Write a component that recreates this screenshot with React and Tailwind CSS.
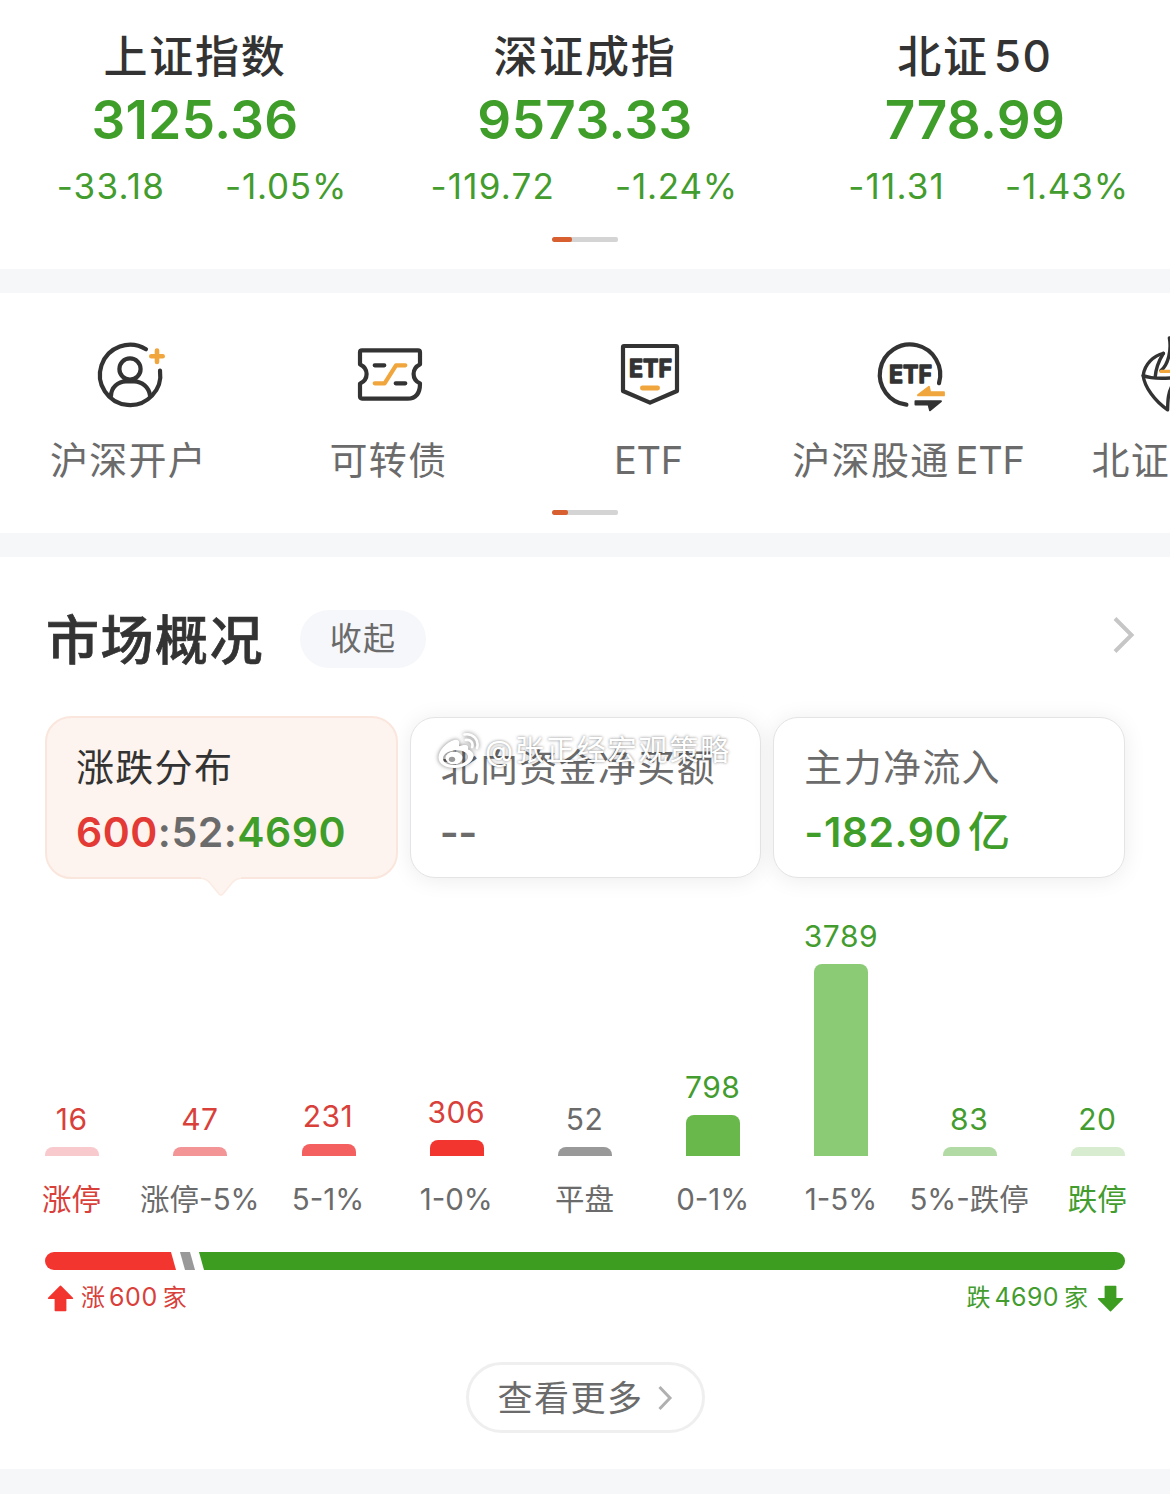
import React from 'react';

const INDICES = [
  { name: '上证指数', value: '3125.36', change: '-33.18', percent: '-1.05%' },
  { name: '深证成指', value: '9573.33', change: '-119.72', percent: '-1.24%' },
  { name: '北证', suffix: '50', value: '778.99', change: '-11.31', percent: '-1.43%' },
];

const BUCKETS = [
  { label: '涨停', count: 16, height: 9, bar: 'bg-[#f8c9cd]', text: 'text-[#d9403a]', labelText: 'text-[#d9403a]' },
  { label: '涨停-5%', count: 47, height: 9, bar: 'bg-[#f39496]', text: 'text-[#d9403a]', labelText: 'text-[#6b6b6b]' },
  { label: '5-1%', count: 231, height: 12, bar: 'bg-[#f45f5f]', text: 'text-[#d9403a]', labelText: 'text-[#6b6b6b]' },
  { label: '1-0%', count: 306, height: 16, bar: 'bg-[#f2352e]', text: 'text-[#d9403a]', labelText: 'text-[#6b6b6b]' },
  { label: '平盘', count: 52, height: 9, bar: 'bg-[#999999]', text: 'text-[#6b6b6b]', labelText: 'text-[#6b6b6b]' },
  { label: '0-1%', count: 798, height: 41, bar: 'bg-[#68b84b]', text: 'text-[#439c2e]', labelText: 'text-[#6b6b6b]' },
  { label: '1-5%', count: 3789, height: 192, bar: 'bg-[#8bcb76]', text: 'text-[#439c2e]', labelText: 'text-[#6b6b6b]' },
  { label: '5%-跌停', count: 83, height: 9, bar: 'bg-[#b1daa4]', text: 'text-[#439c2e]', labelText: 'text-[#6b6b6b]' },
  { label: '跌停', count: 20, height: 9, bar: 'bg-[#d8eccf]', text: 'text-[#439c2e]', labelText: 'text-[#439c2e]' },
];

const DARK = '#333333';
const ORANGE = '#f0a63c';

const AccountIcon = () => (
  <svg width="80" height="80" viewBox="0 0 80 80" fill="none" stroke={DARK} strokeWidth="4.2" strokeLinecap="round">
    <path d="M56 14.2A30.2 30.2 0 1 0 70 35.6" />
    <circle cx="40" cy="34" r="10.6" />
    <path d="M21 61C21 52.5 28 46.4 36 46.4H44C52 46.4 59 52.5 60 60.5" />
    <path d="M67 15.6V27M61.3 21.3H72.7" stroke={ORANGE} strokeWidth="4.6" />
  </svg>
);

const BondIcon = () => (
  <svg width="80" height="80" viewBox="0 0 80 80" fill="none" stroke={DARK} strokeWidth="4.2" strokeLinecap="round" strokeLinejoin="round">
    <path d="M12 15.4H68Q70 15.4 70 17.4V29.3C66 31.2 63.6 34.8 63.6 39S66 46.6 70 48.4C70 58 66 63.6 57.5 63.6H12Q10 63.6 10 61.6V48.6C14 46.8 16.6 43.2 16.6 39S14 31.2 10 29.3V17.4Q10 15.4 12 15.4Z" />
    <path d="M24.7 30.3H34.3M45.7 48.3H55.3" />
    <path d="M24.7 48.3H34.6L46 30.3H55.3" stroke={ORANGE} />
  </svg>
);

const IconText = ({ y }) => (
  <text
    x="19"
    y={y}
    textLength="43"
    lengthAdjust="spacingAndGlyphs"
    fontFamily="Inter, sans-serif"
    fontSize="24.5"
    fontWeight="700"
    fill={DARK}
    stroke={DARK}
    strokeWidth="1.4"
    strokeLinejoin="round"
  >
    ETF
  </text>
);

const EtfIcon = () => (
  <svg width="80" height="80" viewBox="0 0 80 80" fill="none" stroke={DARK} strokeWidth="4.2" strokeLinecap="round" strokeLinejoin="round">
    <path d="M14 11H66Q67 11 67 12V56L40 67.6L13 56V12Q13 11 14 11Z" />
    <IconText y="42.4" />
    <path d="M32.4 53H47.6" stroke={ORANGE} strokeWidth="4.8" />
  </svg>
);

const ConnectIcon = () => (
  <svg width="80" height="80" viewBox="0 0 80 80" fill="none" stroke={DARK} strokeWidth="4.2" strokeLinecap="round" strokeLinejoin="round">
    <path d="M69 48.2A30.2 30.2 0 1 0 36.4 69.7" />
    <IconText y="48.2" />
    <path d="M48 60L59 51.8L60.2 57.2H74L74 60.4H48Z" fill={ORANGE} stroke={ORANGE} strokeWidth="1.8" />
    <path d="M45.4 66.2H71L60 75.4L58.4 69.6H45.4Z" fill={DARK} strokeWidth="1.8" />
  </svg>
);

const BeijingIcon = () => (
  <svg width="40" height="80" viewBox="0 0 40 80" fill="none" stroke={DARK} strokeWidth="3.4" strokeLinecap="round" strokeLinejoin="round">
    <path d="M33.4 18.4C24 20.5 14.5 29 13.2 40.6C14.5 52 25 66.500 37.6 74.8C37.8 65 38 57 43 49" />
    <path d="M33.4 18.4C29 25.5 26 32 25.2 41.8" />
    <path d="M13.2 40.6C21 43.6 30 43.8 42 42.8" />
    <path d="M39.4 3C41.5 15 38.5 29 31 35.6" />
    <path d="M31 36.4H42" stroke={ORANGE} />
  </svg>
);

const WeiboIcon = () => (
  <svg width="44" height="38" viewBox="0 0 44 38" className="drop-shadow-[0_0_2px_rgba(0,0,0,0.5)]">
    <path
      fill="#fff"
      fillRule="evenodd"
      d="M17 8C10 10 1.5 18 1.5 25.5C1.5 32 9 36 17.5 36C28 36 36.5 30 36.5 23.8C36.5 20.2 33.5 18.2 31 17.4C32 13.5 30 11.5 22 14.2C23 10 22 7 17 8ZM17 18.5C25 17.6 31 20.6 31 25C31 29.3 25 32.7 18 33C11 33.2 6 30.5 6 26.5C6 22.5 10.5 19.2 17 18.5Z"
    />
    <ellipse cx="17" cy="26" rx="8.5" ry="6.4" fill="#fff" />
    <ellipse cx="15" cy="27.3" rx="3.2" ry="2.6" fill="#999" />
    <path d="M27.5 2.5C36 1 42.5 8 40 16M28.8 8C33.5 7.2 36.5 11 35.2 15" fill="none" stroke="#fff" strokeWidth="2.6" strokeLinecap="round" />
  </svg>
);

const UpArrow = ({ className }) => (
  <svg width="27" height="27" viewBox="0 0 27 27" className={className} fill="currentColor" stroke="currentColor" strokeWidth="1.6" strokeLinejoin="round">
    <path d="M13.5 1.4L25.4 13.2H18.6V25.4H8.4V13.2H1.6Z" />
  </svg>
);

const Pager = ({ active }) => (
  <div className="mx-auto h-[5px] w-[66px] overflow-hidden rounded-[2px] bg-[#d4d4d4]">
    <div className={`h-full rounded-[2px] bg-[#d85f2f] ${active}`} />
  </div>
);

const Shortcut = ({ icon, children }) => (
  <div className="flex w-[260px] shrink-0 flex-col items-center">
    {icon}
    <div className="mt-5 -ml-[3px] flex text-[38px] leading-[50px] tracking-[1.3px] text-[#6b6b6b]">{children}</div>
  </div>
);

const Card = ({ title, children }) => (
  <div className="mt-px h-[161px] flex-1 rounded-[25px] border border-[#e4e4e6] bg-white pt-[24px] pl-[30px] shadow-[0_2px_22px_rgba(0,0,0,0.08)]">
    <div className="text-[38px] leading-[50px] tracking-[1.3px] text-[#6b6b6b]">{title}</div>
    <div className="mt-[15px] flex text-[41px] leading-[50px] font-semibold tracking-[0.5px]">{children}</div>
  </div>
);

const App = () => {
  return (
    <div className="h-[1494px] w-[1170px] overflow-hidden bg-[#f6f7f9] font-['Inter','Noto_Sans_CJK_SC',sans-serif]">
      <section className="h-[269px] bg-white pt-[29px]">
        <div className="grid grid-cols-3">
          {INDICES.map(item => (
            <div key={item.name} className="flex flex-col items-center">
              <div className="flex gap-[5px] text-[44px] leading-[56px] font-medium tracking-[1.7px] text-[#333]">
                {item.name}
                {item.suffix && <span className="-mt-px">{item.suffix}</span>}
              </div>
              <div className="mt-[5px] text-[53px] leading-[60px] font-semibold tracking-[0.4px] text-[#3f9e29]">{item.value}</div>
              <div className="mt-[12px] flex w-full gap-[60px] text-[35px] leading-[48px] text-[#439c2e]">
                <div className="flex-1 text-right tracking-[1.2px]">{item.change}</div>
                <div className="flex-1 tracking-[0.8px]">{item.percent}</div>
              </div>
            </div>
          ))}
        </div>
        <div className="mt-[27px]">
          <Pager active="w-[20px]" />
        </div>
      </section>

      <section className="mt-6 h-[240px] bg-white pt-[42px]">
        <div className="flex overflow-hidden">
          <Shortcut icon={<AccountIcon />}>沪深开户</Shortcut>
          <Shortcut icon={<BondIcon />}>可转债</Shortcut>
          <Shortcut icon={<EtfIcon />}>
            <span className="tracking-[-0.3px]">ETF</span>
          </Shortcut>
          <Shortcut icon={<ConnectIcon />}>
            沪深股通<span className="ml-[6px] tracking-[-0.2px]">ETF</span>
          </Shortcut>
          <div className="flex w-[130px] flex-col items-end">
            <BeijingIcon />
            <div className="mt-5 text-[38px] leading-[50px] tracking-[1.3px] text-[#6b6b6b]">北证</div>
          </div>
        </div>
        <div className="mt-[25px]">
          <Pager active="w-[16px]" />
        </div>
      </section>

      <section className="mt-6 h-[912px] bg-white px-[45px] pt-[52px]">
        <div className="flex h-[59px] items-center">
          <h2 className="mt-[5px] ml-px text-[53px] leading-[59px] font-medium tracking-[1.5px] text-[#333] [-webkit-text-stroke:0.7px_#333]">
            市场概况
          </h2>
          <button className="ml-[36px] h-[58px] w-[126px] rounded-full bg-[#f6f7fa] text-[32px] leading-[56px] tracking-[1.2px] text-[#6b6b6b]">
            收起
          </button>
          <svg width="24" height="40" viewBox="0 0 24 40" className="-mr-[11px] mb-2 ml-auto" fill="none" stroke="#c6c6c6" strokeWidth="4">
            <path d="M3 3.5L19.5 20L3 36.5" />
          </svg>
        </div>

        <div className="relative mt-[48px] flex gap-3">
          <div className="relative h-[163px] flex-1 rounded-[26px] border-2 border-[#fae6dc] bg-[#fdf4ef] pt-[24px] pl-[29px]">
            <div className="text-[38px] leading-[50px] tracking-[1.3px] text-[#333]">涨跌分布</div>
            <div className="mt-[15px] flex text-[41px] leading-[50px] font-semibold tracking-[0.5px]">
              <span className="text-[#e33a35]">600</span>
              <span className="text-[#6b6b6b]">:52:</span>
              <span className="text-[#3f9e29]">4690</span>
            </div>
            <svg width="40" height="20" viewBox="0 0 40 20" className="absolute -bottom-[20px] left-[154px]">
              <path d="M0 0H40V1C36 1.5 34 3 31 6L22 17Q20 19 18 17L9 6C6 3 4 1.5 0 1Z" fill="#fdf4ef" />
              <path d="M1 1.5C5 1.5 7 4 9 6L18 17Q20 19 22 17L31 6C33 4 35 1.5 39 1.5" fill="none" stroke="#fbebe3" strokeWidth="1.5" />
            </svg>
          </div>
          <Card title="北向资金净买额">
            <span className="-ml-px tracking-[-0.6px] text-[#6b6b6b]">--</span>
          </Card>
          <Card title="主力净流入">
            <span className="text-[#3f9e29]">-182.90</span>
            <span className="ml-[6px] text-[42px] font-medium text-[#3f9e29]">亿</span>
          </Card>
          <div className="absolute top-[14px] left-[392px] flex items-center">
            <WeiboIcon />
            <span className="mt-px ml-[4px] text-[29px] leading-[40px] tracking-[1.9px] text-white [text-shadow:0_0_3px_rgba(0,0,0,0.5)]">
              @张正经宏观策略
            </span>
          </div>
        </div>

        <div className="-mx-[37px] mt-[21px] flex h-[256px] items-end">
          {BUCKETS.map(b => (
            <div key={b.label} className="flex flex-1 flex-col items-center">
              <div className={`-ml-px text-[30px] leading-[36px] tracking-[0.5px] ${b.text}`}>{b.count}</div>
              <div className={`mt-[10px] w-[54px] rounded-t-[8px] ${b.bar}`} style={{ height: b.height }} />
            </div>
          ))}
        </div>
        <div className="-mx-[37px] mt-[23px] flex">
          {BUCKETS.map(b => (
            <div key={b.label} className={`-ml-px flex flex-1 justify-center text-[29.5px] leading-[40px] whitespace-nowrap ${b.labelText}`}>
              {b.label}
            </div>
          ))}
        </div>

        <div className="mt-[33px] flex h-[18px] overflow-hidden rounded-full">
          <div className="w-[131px] bg-[#f2352e] [clip-path:polygon(0_0,126px_0,100%_100%,0_100%)]" />
          <div className="ml-1 w-[15px] bg-[#999] [clip-path:polygon(0_0,10px_0,100%_100%,5px_100%)]" />
          <div className="ml-1 flex-1 bg-[#3c9d20] [clip-path:polygon(0_0,100%_0,100%_100%,5px_100%)]" />
        </div>
        <div className="mt-[10px] flex h-[36px] items-center justify-between text-[24px]">
          <div className="flex items-center text-[#d9403a]">
            <UpArrow className="mt-px ml-[2px] text-[#f2352e]" />
            <span className="ml-[7px]">涨</span>
            <span className="ml-[4px] text-[25px] tracking-[0.6px]">600</span>
            <span className="ml-[5px]">家</span>
          </div>
          <div className="flex items-center text-[#439c2e]">
            <span>跌</span>
            <span className="ml-[4px] text-[25px] tracking-[0.4px]">4690</span>
            <span className="ml-[5px]">家</span>
            <UpArrow className="mr-px ml-[9px] rotate-180 text-[#3c9d20]" />
          </div>
        </div>

        <button className="mx-auto mt-[46px] flex h-[71px] w-[239px] items-center rounded-full border-[3px] border-[#efefef] bg-white pl-[29px] text-[35px] tracking-[1.5px] text-[#6b6b6b]">
          <span className="mt-[2px]">查看更多</span>
          <svg width="16" height="28" viewBox="0 0 16 28" className="ml-[13px]" fill="none" stroke="#b0b0b0" strokeWidth="3">
            <path d="M2.5 3L13 14L2.5 25" />
          </svg>
        </button>
      </section>
    </div>
  );
};

export default App;
